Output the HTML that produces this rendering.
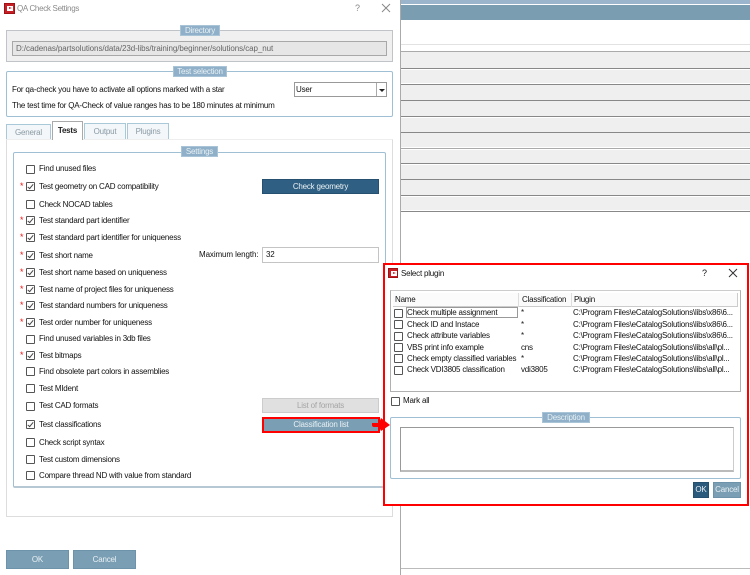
<!DOCTYPE html>
<html><head><meta charset="utf-8"><style>
html,body{margin:0;padding:0;background:#fff}
#p{position:relative;width:750px;height:575px;overflow:hidden;background:#fff;font-family:"Liberation Sans",sans-serif;font-size:8px;letter-spacing:-.21px;color:#111;filter:blur(.3px)}
#p div,#p span.a{position:absolute;box-sizing:border-box}
.t{white-space:nowrap;line-height:12px;height:12px;transform:translateY(1px)}
.leg{background:#8fb0c8;color:#e8f0f4;text-align:center;line-height:10px;border:1px solid #a8c4d6}
.cb{width:9px;height:9px;border:1px solid #555;background:#fff;border-radius:1px}
.m{margin-top:1px}
.cb.c:after{content:"";position:absolute;left:2px;top:0px;width:2px;height:5px;border:solid #444;border-width:0 1px 1px 0;transform:rotate(40deg)}
.s{color:#e11;font-size:9px;line-height:10px;width:5px;height:10px}
.btn{color:#e8f0f4;text-align:center;background:#7a9eb3;border:1px solid #6d93aa}
.tab{background:#f3f7f9;border:1px solid #a9c8d8;border-bottom:0;color:#8a9aa5;text-align:center;line-height:16px}
.ln{left:401px;width:349px;height:1px;background:#888}
.rw{left:401px;width:349px;background:#efefef}
.ic{background:#c62026;border:1px solid #a01015}
.ic:after{content:"";position:absolute;left:2px;top:2px;width:6px;height:5px;background:#fff}
.ic:before{content:"";position:absolute;z-index:1;left:4px;top:3px;border-left:3px solid #c62026;border-top:1.5px solid transparent;border-bottom:1.5px solid transparent}
</style></head><body><div id="p">

<!-- right background -->
<div style="left:400px;top:0;width:1px;height:575px;background:#aaa"></div>
<div style="left:401px;top:0;width:349px;height:4px;background:#9ab5cc"></div>
<div style="left:401px;top:5px;width:349px;height:15px;background:#7a9db2"></div>
<div class="ln" style="top:44px;background:#e2e2e2"></div>
<div class="ln" style="top:51px;background:#aaa"></div>
<div class="rw" style="top:52px;height:16px"></div>
<div class="ln" style="top:68px"></div>
<div class="rw" style="top:70px;height:13px"></div>
<div class="ln" style="top:84px"></div>
<div class="rw" style="top:85px;height:15px"></div>
<div class="ln" style="top:100px"></div>
<div class="rw" style="top:101px;height:15px"></div>
<div class="ln" style="top:116px"></div>
<div class="rw" style="top:118px;height:14px"></div>
<div class="ln" style="top:132px"></div>
<div class="rw" style="top:133px;height:14px"></div>
<div class="ln" style="top:148px;background:#aaa"></div>
<div class="rw" style="top:150px;height:13px"></div>
<div class="ln" style="top:163px"></div>
<div class="rw" style="top:165px;height:14px"></div>
<div class="ln" style="top:179px"></div>
<div class="rw" style="top:180px;height:15px"></div>
<div class="ln" style="top:195px"></div>
<div class="rw" style="top:197px;height:13px"></div>
<div class="ln" style="top:211px"></div>
<div class="ln" style="top:568px;background:#bbb"></div>

<!-- title -->
<div class="ic" style="left:4px;top:3px;width:11px;height:11px"></div>
<div class="t" style="left:17px;top:2px;color:#8a8a8a;letter-spacing:-.3px">QA Check Settings</div>
<div class="t" style="left:355px;top:1px;color:#888;font-size:9px">?</div>
<svg style="position:absolute;left:381px;top:3px" width="10" height="10"><path d="M1 1l8 8M9 1l-8 8" stroke="#888" stroke-width="1" fill="none"/></svg>

<!-- Directory -->
<div style="left:6px;top:30px;width:387px;height:32px;background:#f0f0f0;border:1px solid #c0c4c8"></div>
<div class="leg" style="left:180px;top:25px;width:40px;height:11px">Directory</div>
<div style="left:12px;top:41px;width:375px;height:15px;background:#e6e6e6;border:1px solid #a8a8a8"></div>
<div class="t" style="left:16px;top:42px;color:#666;letter-spacing:-.07px">D:/cadenas/partsolutions/data/23d-libs/training/beginner/solutions/cap_nut</div>

<!-- Test selection -->
<div style="left:6px;top:71px;width:387px;height:46px;border:1px solid #9fc0d4;border-radius:2px"></div>
<div class="leg" style="left:173px;top:66px;width:54px;height:11px">Test selection</div>
<div class="t" style="left:12px;top:83px">For qa-check you have to activate all options marked with a star</div>
<div class="t" style="left:12px;top:99px">The test time for QA-Check of value ranges has to be 180 minutes at minimum</div>
<div style="left:294px;top:82px;width:93px;height:15px;border:1px solid #999;background:#fff"></div>
<div class="t" style="left:296px;top:83px">User</div>
<div style="left:376px;top:83px;width:1px;height:13px;background:#aaa"></div>
<div style="left:379px;top:89px;border-top:3px solid #222;border-left:3px solid transparent;border-right:3px solid transparent"></div>

<!-- tabs -->
<div style="left:6px;top:139px;width:387px;height:378px;border:1px solid #ddd;border-top-color:#eee;background:#fff"></div>
<div class="tab" style="left:6px;top:124px;width:45px;height:15px">General</div>
<div class="tab" style="left:52px;top:121px;width:31px;height:19px;background:#fff;color:#222;font-weight:bold;line-height:17px;border-color:#aaa;z-index:2">Tests</div>
<div class="tab" style="left:84px;top:123px;width:42px;height:16px">Output</div>
<div class="tab" style="left:127px;top:123px;width:42px;height:16px">Plugins</div>

<!-- Settings -->
<div style="left:13px;top:152px;width:373px;height:336px;border:1px solid #9fc0d4;border-bottom:2px solid #b5c8d4;border-radius:2px"></div>
<div class="leg" style="left:181px;top:146px;width:37px;height:11px">Settings</div>

<div class="cb m" style="left:26px;top:164px"></div><div class="t" style="left:39px;top:162px">Find unused files</div>
<div class="s" style="left:20px;top:181px">*</div><div class="cb c m" style="left:26px;top:181px"></div><div class="t" style="left:39px;top:180px">Test geometry on CAD compatibility</div>
<div class="cb m" style="left:26px;top:199px"></div><div class="t" style="left:39px;top:198px">Check NOCAD tables</div>
<div class="s" style="left:20px;top:215px">*</div><div class="cb c m" style="left:26px;top:215px"></div><div class="t" style="left:39px;top:214px">Test standard part identifier</div>
<div class="s" style="left:20px;top:232px">*</div><div class="cb c m" style="left:26px;top:232px"></div><div class="t" style="left:39px;top:231px">Test standard part identifier for uniqueness</div>
<div class="s" style="left:20px;top:250px">*</div><div class="cb c m" style="left:26px;top:250px"></div><div class="t" style="left:39px;top:249px">Test short name</div>
<div class="s" style="left:20px;top:267px">*</div><div class="cb c m" style="left:26px;top:267px"></div><div class="t" style="left:39px;top:266px">Test short name based on uniqueness</div>
<div class="s" style="left:20px;top:284px">*</div><div class="cb c m" style="left:26px;top:284px"></div><div class="t" style="left:39px;top:283px">Test name of project files for uniqueness</div>
<div class="s" style="left:20px;top:300px">*</div><div class="cb c m" style="left:26px;top:300px"></div><div class="t" style="left:39px;top:299px">Test standard numbers for uniqueness</div>
<div class="s" style="left:20px;top:317px">*</div><div class="cb c m" style="left:26px;top:317px"></div><div class="t" style="left:39px;top:316px">Test order number for uniqueness</div>
<div class="cb m" style="left:26px;top:334px"></div><div class="t" style="left:39px;top:332px">Find unused variables in 3db files</div>
<div class="s" style="left:20px;top:350px">*</div><div class="cb c m" style="left:26px;top:350px"></div><div class="t" style="left:39px;top:349px">Test bitmaps</div>
<div class="cb m" style="left:26px;top:366px"></div><div class="t" style="left:39px;top:365px">Find obsolete part colors in assemblies</div>
<div class="cb m" style="left:26px;top:383px"></div><div class="t" style="left:39px;top:382px">Test MIdent</div>
<div class="cb m" style="left:26px;top:401px"></div><div class="t" style="left:39px;top:399px">Test CAD formats</div>
<div class="cb c m" style="left:26px;top:419px"></div><div class="t" style="left:39px;top:418px">Test classifications</div>
<div class="cb m" style="left:26px;top:437px"></div><div class="t" style="left:39px;top:436px">Check script syntax</div>
<div class="cb m" style="left:26px;top:454px"></div><div class="t" style="left:39px;top:453px">Test custom dimensions</div>
<div class="cb m" style="left:26px;top:470px"></div><div class="t" style="left:39px;top:469px">Compare thread ND with value from standard</div>

<div class="btn" style="left:262px;top:179px;width:117px;height:15px;background:#2f5f82;border-color:#25506f;line-height:13px">Check geometry</div>
<div class="t" style="left:199px;top:248px;letter-spacing:-.1px">Maximum length:</div>
<div style="left:262px;top:247px;width:117px;height:16px;border:1px solid #c4c4c4;background:#fff"></div>
<div class="t" style="left:266px;top:248px">32</div>
<div class="btn" style="left:262px;top:398px;width:117px;height:15px;background:#e0e0e0;border-color:#ccc;color:#a5a5a5;line-height:13px">List of formats</div>
<div class="btn" style="left:262px;top:417px;width:118px;height:16px;background:#7a9eb3;border:2px solid #f00;line-height:12px">Classification list</div>

<div class="btn" style="left:6px;top:550px;width:63px;height:19px;line-height:17px">OK</div>
<div class="btn" style="left:73px;top:550px;width:63px;height:19px;line-height:17px">Cancel</div>

<!-- dialog -->
<div style="left:383px;top:263px;width:366px;height:243px;background:#fff;border:2px solid #f00"></div>
<div class="ic" style="left:388px;top:268px;width:10px;height:10px"></div>
<div class="t" style="left:401px;top:267px">Select plugin</div>
<div class="t" style="left:702px;top:266px;font-size:9px">?</div>
<svg style="position:absolute;left:728px;top:268px" width="10" height="10"><path d="M1 1l8 8M9 1l-8 8" stroke="#333" stroke-width="1" fill="none"/></svg>

<div style="left:390px;top:290px;width:351px;height:102px;border:1px solid #b0b0b0;border-top-color:#ccc"></div>
<div style="left:393px;top:293px;width:345px;height:14px;background:#fbfbfb;border-bottom:1px solid #ccc;border-right:1px solid #ccc"></div>
<div style="left:518px;top:293px;width:1px;height:14px;background:#ddd"></div>
<div style="left:571px;top:293px;width:1px;height:14px;background:#ddd"></div>
<div class="t" style="left:395px;top:293px">Name</div>
<div class="t" style="left:522px;top:293px">Classification</div>
<div class="t" style="left:574px;top:293px">Plugin</div>
<div style="left:406px;top:307px;width:112px;height:11px;border:1px solid #999"></div>

<div class="cb" style="left:394px;top:309px"></div><div class="t" style="left:407px;top:306px">Check multiple assignment</div><div class="t" style="left:521px;top:306px">*</div><div class="t" style="left:573px;top:306px">C:\Program Files\eCatalogSolutions\libs\x86\6...</div>
<div class="cb" style="left:394px;top:320px"></div><div class="t" style="left:407px;top:318px">Check ID and Instace</div><div class="t" style="left:521px;top:318px">*</div><div class="t" style="left:573px;top:318px">C:\Program Files\eCatalogSolutions\libs\x86\6...</div>
<div class="cb" style="left:394px;top:332px"></div><div class="t" style="left:407px;top:329px">Check attribute variables</div><div class="t" style="left:521px;top:329px">*</div><div class="t" style="left:573px;top:329px">C:\Program Files\eCatalogSolutions\libs\x86\6...</div>
<div class="cb" style="left:394px;top:343px"></div><div class="t" style="left:407px;top:341px">VBS print info example</div><div class="t" style="left:521px;top:341px">cns</div><div class="t" style="left:573px;top:341px">C:\Program Files\eCatalogSolutions\libs\all\pl...</div>
<div class="cb" style="left:394px;top:354px"></div><div class="t" style="left:407px;top:352px">Check empty classified variables</div><div class="t" style="left:521px;top:352px">*</div><div class="t" style="left:573px;top:352px">C:\Program Files\eCatalogSolutions\libs\all\pl...</div>
<div class="cb" style="left:394px;top:366px"></div><div class="t" style="left:407px;top:363px">Check VDI3805 classification</div><div class="t" style="left:521px;top:363px">vdi3805</div><div class="t" style="left:573px;top:363px">C:\Program Files\eCatalogSolutions\libs\all\pl...</div>

<div class="cb" style="left:390.5px;top:397px"></div><div class="t" style="left:403px;top:394px">Mark all</div>

<div style="left:390px;top:417px;width:351px;height:62px;border:1px solid #9fc0d4;border-radius:2px"></div>
<div class="leg" style="left:542px;top:412px;width:48px;height:11px">Description</div>
<div style="left:400px;top:427px;width:334px;height:45px;border:1px solid #999;border-bottom:2px solid #bbb;border-right-color:#ccc"></div>
<div class="btn" style="left:693px;top:482px;width:16px;height:16px;background:#2a5a7c;border-color:#245070;line-height:14px">OK</div>
<div class="btn" style="left:713px;top:482px;width:28px;height:16px;line-height:14px">Cancel</div>

<!-- arrow -->
<svg style="position:absolute;left:370px;top:416px" width="22" height="18"><path d="M2 7h7l2-5 9 7-9 6-2-4H4q-2 0-2-2z" fill="#f00"/></svg>

</div></body></html>
